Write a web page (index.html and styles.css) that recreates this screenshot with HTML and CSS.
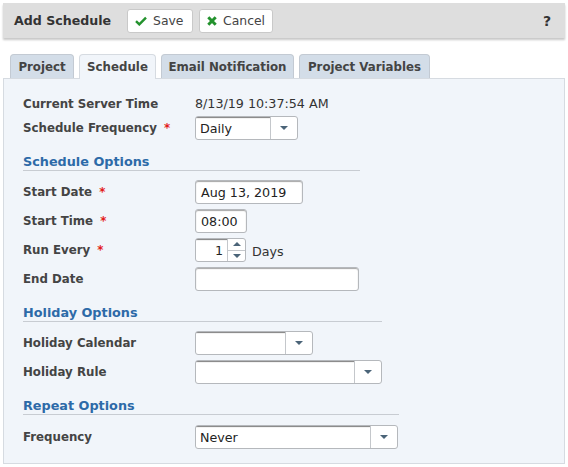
FILE: index.html
```html
<!DOCTYPE html>
<html>
<head>
<meta charset="utf-8">
<link rel="stylesheet" href="styles.css">
</head>
<body>
<div class="toolbar">
  <span class="title">Add Schedule</span>
  <button class="btn"><svg class="ico" width="12" height="10" viewBox="0 0 12 10"><path d="M1 5.2 L4.3 8.4 L11 1.6" fill="none" stroke="#23922d" stroke-width="2.4"/></svg>Save</button>
  <button class="btn"><svg class="ico" width="10" height="10" viewBox="0 0 10 10"><path d="M1.3 1.3 L8.7 8.7 M8.7 1.3 L1.3 8.7" fill="none" stroke="#23922d" stroke-width="3"/></svg>Cancel</button>
  <span class="help">?</span>
</div>
<div class="tabs">
  <div class="tab">Project</div>
  <div class="tab active">Schedule</div>
  <div class="tab">Email Notification</div>
  <div class="tab">Project Variables</div>
</div>
<div class="panel">
  <div class="row first"><span class="label">Current Server Time</span><span class="value">8/13/19 10:37:54 AM</span></div>
  <div class="row"><span class="label">Schedule Frequency <i class="req">*</i></span>
    <div class="select w103"><span class="sel-text">Daily</span><span class="sel-btn"><b class="tri"></b></span></div></div>

  <div class="section w337">Schedule Options</div>
  <div class="row"><span class="label">Start Date <i class="req">*</i></span><div class="input w108">Aug 13, 2019</div></div>
  <div class="row"><span class="label">Start Time <i class="req">*</i></span><div class="input w52">08:00</div></div>
  <div class="row"><span class="label">Run Every <i class="req">*</i></span>
    <div class="spinner"><span class="spin-text">1</span><span class="spin-btns"><span class="spin-up"><b class="tri up"></b></span><span class="spin-down"><b class="tri"></b></span></span></div><span class="unit">Days</span></div>
  <div class="row"><span class="label">End Date</span><div class="input w164"></div></div>

  <div class="section w359">Holiday Options</div>
  <div class="row"><span class="label">Holiday Calendar</span>
    <div class="select w118"><span class="sel-text"></span><span class="sel-btn"><b class="tri"></b></span></div></div>
  <div class="row"><span class="label">Holiday Rule</span>
    <div class="select w187"><span class="sel-text"></span><span class="sel-btn"><b class="tri"></b></span></div></div>

  <div class="section w376 last-section">Repeat Options</div>
  <div class="row last"><span class="label">Frequency</span>
    <div class="select w203"><span class="sel-text">Never</span><span class="sel-btn"><b class="tri"></b></span></div></div>
</div>
</body>
</html>
```

FILE: styles.css
```css
* { box-sizing: border-box; }
body {
  margin: 0;
  background: #fff;
  font-family: "DejaVu Sans", Verdana, sans-serif;
  color: #333;
}
.toolbar {
  margin: 3px 3px 0 3px;
  height: 35px;
  background: #dedede;
  box-shadow: 0 2px 2px rgba(0,0,0,0.22);
  display: flex;
  align-items: center;
  padding-left: 11px;
  padding-right: 14px;
}
.title {
  font-weight: bold;
  font-size: 12.6px;
  color: #333;
  margin-right: 16px;
}
.btn {
  height: 24px;
  background: #fff;
  border: 1px solid #c9c9c9;
  border-radius: 3px;
  font-family: "DejaVu Sans", Verdana, sans-serif;
  font-size: 12.4px;
  color: #444;
  display: flex;
  align-items: center;
  gap: 6px;
  padding: 0 10px 0 7px;
  margin-right: 6px;
}
.ico { flex: none; display: block; }
.btn:first-of-type { width: 66px; }
.btn:nth-of-type(2) { width: 74px; }
.help {
  margin-left: auto;
  font-weight: bold;
  font-size: 14px;
  color: #333;
}
.tabs {
  display: flex;
  gap: 5px;
  margin-top: 16px;
  padding-left: 10px;
  height: 24px;
  position: relative;
  z-index: 1;
}
.tab {
  height: 24px;
  background: #d3dde8;
  border: 1px solid #c3cad3;
  border-bottom: none;
  border-radius: 4px 4px 0 0;
  font-weight: bold;
  font-size: 11.8px;
  color: #444;
  display: flex;
  align-items: center;
  justify-content: center;
  padding-top: 1px;
}
.tab:nth-child(1) { width: 64px; }
.tab:nth-child(2) { width: 77px; }
.tab:nth-child(3) { width: 133px; }
.tab:nth-child(4) { width: 131px; }
.tab.active {
  background: #f1f5fa;
  height: 25px;
  border-color: #d6dbe1;
  padding-bottom: 1px;
}
.panel {
  margin: 0 3px;
  height: 386px;
  background: #f1f5fa;
  border: 1px solid #d6dbe1;
  padding: 13px 0 0 19px;
}
.row {
  display: flex;
  align-items: center;
  height: 24px;
  margin-bottom: 5px;
}
.row.first { margin-bottom: 1px; height: 23px; }
.label {
  width: 172px;
  flex: none;
  font-weight: bold;
  font-size: 11.8px;
  color: #444;
}
.req {
  font-style: normal;
  color: #e31b1b;
  margin-left: 3px;
}
.value {
  font-size: 12.7px;
  color: #333;
}
.section {
  font-weight: bold;
  font-size: 12.8px;
  color: #2d6aa8;
  height: 17px;
  line-height: 16px;
  border-bottom: 1px solid #c8ccd2;
  margin-top: 14px;
  margin-bottom: 9px;
}
.section.last-section { margin-bottom: 10px; }
.w337 { width: 337px; }
.w359 { width: 359px; }
.w376 { width: 376px; }
.input, .select, .spinner {
  height: 24px;
  background: #fff;
  border: 1px solid #b5b8bc;
  border-radius: 3px;
  box-shadow: inset 0 1px 1px rgba(0,0,0,0.35);
  font-size: 12.7px;
  color: #222;
  display: flex;
  align-items: center;
}
.input { padding-left: 5px; }
.w108 { width: 108px; }
.w52 { width: 52px; }
.w164 { width: 164px; }
.w103 { width: 103px; }
.w118 { width: 118px; }
.w187 { width: 187px; }
.w203 { width: 203px; }
.select { box-shadow: none; overflow: hidden; }
.sel-text {
  flex: 1;
  height: 100%;
  padding-left: 4px;
  display: flex;
  align-items: center;
  box-shadow: inset 0 2px 1px -1px rgba(0,0,0,0.5);
  border-right: 1px solid #c4c7cb;
}
.sel-btn {
  width: 26px;
  height: 100%;
  display: flex;
  align-items: center;
  justify-content: center;
}
.tri {
  display: block;
  width: 0;
  height: 0;
  border-left: 4px solid transparent;
  border-right: 4px solid transparent;
  border-top: 4px solid #4b6478;
}
.tri.up {
  border-top: none;
  border-bottom: 4px solid #4b6478;
}
.spinner {
  width: 51px;
  box-shadow: none;
  overflow: hidden;
}
.spin-text {
  flex: 1;
  height: 100%;
  display: flex;
  align-items: center;
  justify-content: flex-end;
  padding-right: 4px;
  box-shadow: inset 0 2px 1px -1px rgba(0,0,0,0.5);
  border-right: 1px solid #c4c7cb;
}
.spin-btns {
  width: 17px;
  height: 100%;
  display: flex;
  flex-direction: column;
}
.spin-up, .spin-down {
  flex: 1;
  display: flex;
  align-items: center;
  justify-content: center;
}
.spin-up { border-bottom: 1px solid #c4c7cb; }
.unit {
  margin-left: 6px;
  font-size: 12.7px;
  color: #333;
  padding-top: 3px;
}
```
